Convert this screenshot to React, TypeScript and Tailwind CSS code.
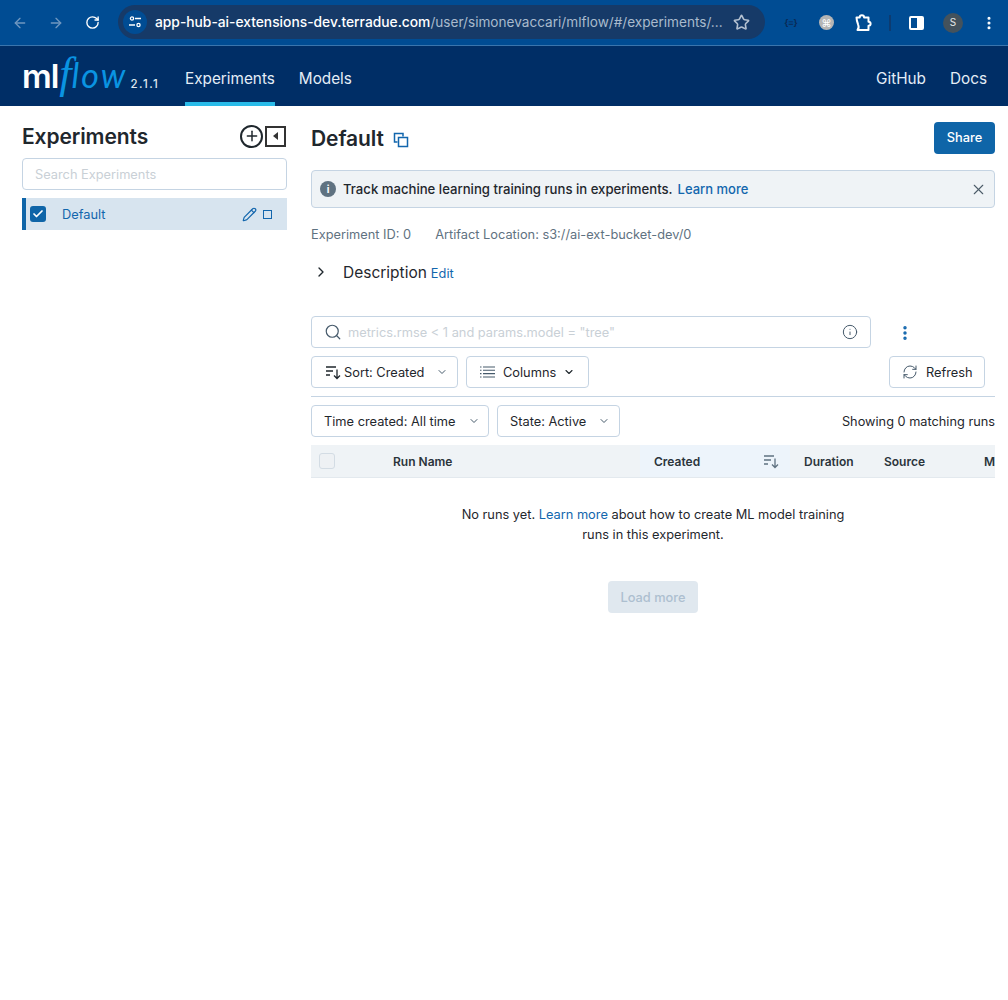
import React from "react";
import { ArrowLeft, ArrowRight, RotateCw, Star, Search, Info, ChevronDown, ChevronRight, X, RefreshCw, Pencil, Check, EllipsisVertical, Plus, MoreVertical } from "lucide-react";

const font = { fontFamily: "Inter, 'Liberation Sans', sans-serif" };

function SortIcon({ className = "" }: { className?: string }) {
  return (
    <svg viewBox="0 0 16 16" width="16" height="16" fill="none" stroke="currentColor" strokeWidth="1.3" className={className}>
      <path d="M1 3h10M1 7h7M1 11h4" />
      <path d="M12 5.5v9M9 11.5l3 3 3-3" />
    </svg>
  );
}

function Btn({ children, className = "" }: { children: React.ReactNode; className?: string }) {
  return (
    <div className={`h-8 flex items-center border border-[#c5d4e3] rounded-[4px] bg-white text-[12.8px] text-[#1f272d] [&>span]:mt-[2px] ${className}`}>
      {children}
    </div>
  );
}

function Chrome() {
  return (
    <div className="h-[46px] bg-[#004c93] border-b border-[#3a75ad] flex items-center">
      <ArrowLeft size={16} className="ml-[12px] text-[#6f97c0]" strokeWidth={2} />
      <ArrowRight size={16} className="ml-[20px] text-[#6f97c0]" strokeWidth={2} />
      <RotateCw size={15} className="ml-[21px] text-white" strokeWidth={2.2} />
      <div className="ml-[18px] w-[647px] h-[34px] mt-[-1px] rounded-full bg-[#163a68] flex items-center">
        <div className="ml-[5px] w-6 h-6 rounded-full bg-[#004c93] flex items-center justify-center">
          <svg viewBox="0 0 14 14" width="14" height="14" fill="none" stroke="white" strokeWidth="1.3">
            <circle cx="4" cy="3.5" r="1.6" />
            <path d="M7 3.5h6M1 10h6" />
            <circle cx="10.5" cy="10" r="1.6" />
          </svg>
        </div>
        <div className="ml-[8px] text-[13.8px] text-white font-medium whitespace-nowrap">
          app-hub-ai-extensions-dev.terradue.com<span className="text-[#a9bacd] font-normal text-[13.6px]">/user/simonevaccari/mlflow/#/experiments/...</span>
        </div>
        <Star size={17} className="ml-auto mr-[15px] text-[#b4c1d1]" strokeWidth={2.3} />
      </div>
      <div className="ml-[17px] w-[18px] text-[9px] font-bold text-[#0a2a55] text-center leading-none whitespace-nowrap">{"{≡}"}</div>
      <div className="ml-[19px] w-[15px] h-[15px] rounded-full bg-[#b5b5b5] text-white text-[10px] flex items-center justify-center leading-none">⌘</div>
      <svg viewBox="0 0 18 18" width="18" height="18" fill="none" stroke="white" strokeWidth="2" strokeLinejoin="round" className="ml-[20px]">
        <path d="M2.5 3.5h3.2c0-3 4.4-3 4.4 0h4.4v4.2c2.8 0 2.8 4 0 4v4.3H3.5c1.4-1.5 1.4-3.5 .6-5.5C3.4 8.5 2.5 6 2.5 3.5z" />
      </svg>
      <div className="ml-[17px] w-[2px] h-4 bg-[#0d3b70]" />
      <div className="ml-[18px] w-[15px] h-[14px] border-2 border-white rounded-[2px] flex justify-end">
        <div className="w-[5px] bg-white" />
      </div>
      <div className="ml-[19px] w-5 h-5 rounded-full bg-[#44525c] text-[#e5e7e9] text-[10px] flex items-center justify-center">S</div>
      <MoreVertical size={16} className="ml-[18px] text-white" strokeWidth={2.6} />
    </div>
  );
}

function Header() {
  return (
    <div className="h-[60px] bg-[#002e66] flex pl-[22px] pr-[21px] text-[#e4edf6] text-[15.3px]">
      <div className="flex items-end w-[163px]">
        <div className="flex items-baseline mb-[10px] leading-none">
          <span className="text-white text-[33px] font-semibold tracking-[-1px]">ml</span>
          <span className="text-[#0a94e2] text-[44px] italic ml-[1px]" style={{ fontFamily: "'Liberation Serif', serif" }}>f</span>
          <span className="text-[#0a94e2] text-[34px] italic tracking-[2px] w-[57px]" style={{ fontFamily: "Lato, sans-serif" }}>low</span>
          <span className="text-[11.5px] tracking-[1.4px] ml-[2px] text-[#dfe7ef] font-medium">2.1.1</span>
        </div>
      </div>
      <div className="relative flex items-center h-full pt-[6px]">
        <span>Experiments</span>
        <div className="absolute left-0 right-0 bottom-0 h-1 bg-[#29bbe9]" />
      </div>
      <div className="flex items-center ml-[24px] pt-[6px]">Models</div>
      <div className="flex items-center ml-auto pt-[6px]">GitHub</div>
      <div className="flex items-center ml-[24px] pt-[6px]">Docs</div>
    </div>
  );
}

function Sidebar() {
  return (
    <div className="w-[265px] ml-[22px] shrink-0 pt-[15px]">
      <div className="h-[30px] flex items-center justify-between">
        <span className="mt-[2px] text-[21px] font-semibold text-[#1f272d] tracking-[-0.1px]">Experiments</span>
        <div className="flex items-center mr-[1px]">
          <div className="w-[23px] h-[23px] rounded-full border-2 border-[#1f272d] flex items-center justify-center">
            <Plus size={16} strokeWidth={2.2} className="text-[#1f272d]" />
          </div>
          <div className="ml-[2px] w-[21px] h-[21px] border-2 border-[#333] flex items-center justify-center">
            <div className="w-0 h-0 border-y-[4px] border-y-transparent border-r-[5px] border-r-[#333]" />
          </div>
        </div>
      </div>
      <div className="mt-[7px] h-8 border border-[#c5d4e3] rounded-[4px] flex items-center pl-[12px] text-[12.8px] text-[#c9d0d6]">
        <span className="mt-[2px]">Search Experiments</span>
      </div>
      <div className="mt-2 h-8 bg-[#d7e4ef] border-l-4 border-[#0f65a8] flex items-center pl-1 text-[12.8px] text-[#1266ad]">
        <div className="w-4 h-4 rounded-[3px] bg-[#0f65a8] flex items-center justify-center">
          <Check size={12} strokeWidth={3.5} className="text-white" />
        </div>
        <span className="ml-4 mt-[2px]">Default</span>
        <Pencil size={15} strokeWidth={1.9} className="ml-auto text-[#1266ad]" />
        <div className="ml-[6px] mr-[15px] w-[9px] h-[9px] border border-[#1266ad]" />
      </div>
    </div>
  );
}

function Main() {
  return (
    <div className="ml-[24px] w-[684px] shrink-0 overflow-hidden">
      <div className="pt-4 flex justify-between items-start">
        <div className="flex items-center h-[32px]">
          <span className="mt-[2px] text-[21px] font-semibold text-[#1f272d] tracking-[-0.1px]">Default</span>
          <svg viewBox="0 0 16 16" width="16" height="16" fill="none" stroke="#1266ad" strokeWidth="1.5" className="ml-[9px] mt-[3px]">
            <path d="M10 4.5V1.5H1.5V10H4.5" />
            <rect x="5.5" y="5.5" width="9" height="9" />
          </svg>
        </div>
        <div className="w-[61px] h-8 bg-[#0f65a8] rounded-[4px] text-white text-[12.8px] font-medium flex items-center justify-center">Share</div>
      </div>

      <div className="mt-4 h-[38px] bg-[#eff3f6] border border-[#c5d4e3] rounded-[4px] flex items-center text-[13.15px] font-medium text-[#1f272d]">
        <div className="ml-2 w-[16px] h-[16px] rounded-full bg-[#5f7281] text-white flex items-center justify-center text-[10px] font-bold leading-none">i</div>
        <span className="ml-[7px] mt-[2px]">Track machine learning training runs in experiments.</span>
        <span className="ml-[5px] mt-[2px] text-[#1266ad] text-[13px]">Learn more</span>
        <X size={17} strokeWidth={1.5} className="ml-auto mr-[7px] text-[#4c5c69]" />
      </div>

      <div className="mt-[19px] h-4 flex items-center text-[12.8px] text-[#5f7281]">
        <span>Experiment ID: 0</span>
        <span className="ml-[24px]">Artifact Location: s3://ai-ext-bucket-dev/0</span>
      </div>

      <div className="mt-[17px] h-6 flex items-center text-[#1f272d]">
        <ChevronRight size={16} strokeWidth={2} className="ml-[2px]" />
        <span className="ml-[14px] mt-[2px] text-[15.5px]">Description</span>
        <span className="ml-[4px] mt-[4px] text-[12.8px] text-[#1266ad]">Edit</span>
      </div>

      <div className="mt-[32px] flex items-center">
        <Btn className="w-[560px] pl-[12px] pr-3">
          <Search size={18} strokeWidth={1.6} className="text-[#465a6b]" />
          <span className="ml-[6px] text-[#c9d0d6]">metrics.rmse &lt; 1 and params.model = "tree"</span>
          <Info size={16} strokeWidth={1.5} className="ml-auto text-[#465a6b]" />
        </Btn>
        <EllipsisVertical size={18} strokeWidth={2.6} className="ml-[25px] mt-[1px] text-[#1266ad]" />
      </div>

      <div className="mt-2 flex items-center w-[674px]">
        <Btn className="w-[147px] pl-[13px]">
          <SortIcon className="text-[#1f272d]" />
          <span className="ml-[3px]">Sort: Created</span>
          <ChevronDown size={12} strokeWidth={2} className="ml-[12px] text-[#465a6b]" />
        </Btn>
        <Btn className="ml-2 w-[123px] pl-[12px]">
          <svg viewBox="0 0 16 16" width="17" height="16" fill="none" stroke="#465a6b" strokeWidth="1.1">
            <path d="M3.5 3h12M3.5 6.3h12M3.5 9.6h12M3.5 13h12M.5 3h1.5M.5 6.3h1.5M.5 9.6h1.5M.5 13h1.5" />
          </svg>
          <span className="ml-[7px]">Columns</span>
          <ChevronDown size={12} strokeWidth={2.2} className="ml-[7px] text-[#1f272d]" />
        </Btn>
        <Btn className="ml-auto w-[96px] pl-[12px]">
          <RefreshCw size={16} strokeWidth={1.5} className="text-[#465a6b]" />
          <span className="ml-2">Refresh</span>
        </Btn>
      </div>

      <div className="mt-2 border-t border-[#c5d4e3]" />

      <div className="mt-2 flex items-center">
        <Btn className="w-[178px] pl-[12px]">
          <span>Time created: All time</span>
          <ChevronDown size={12} strokeWidth={2} className="ml-[12px] text-[#465a6b]" />
        </Btn>
        <Btn className="ml-2 w-[123px] pl-[12px]">
          <span>State: Active</span>
          <ChevronDown size={12} strokeWidth={2} className="ml-[12px] text-[#465a6b]" />
        </Btn>
        <span className="ml-auto mt-[2px] text-[12.75px] text-[#1f272d] whitespace-nowrap">Showing 0 matching runs</span>
      </div>

      <div className="mt-2 h-[33px] bg-[#eff3f6] border-b border-[#e3e9ee] flex items-center text-[12px] font-semibold text-[#2b343b] whitespace-nowrap [&>span]:mt-[2px] [&>span]:shrink-0">
        <div className="ml-[8px] w-4 h-4 shrink-0 border border-[#d3dce4] rounded-[3px] bg-[#eef1f4]" />
        <span className="ml-[58px] w-[247px]">Run Name</span>
        <div className="w-[150px] shrink-0 h-full bg-[#edf4fb] flex items-center pl-[14px] pr-[11px] [&>span]:mt-[2px]">
          <span>Created</span>
          <SortIcon className="ml-auto text-[#5f7281]" />
        </div>
        <span className="ml-[14px] w-[80px]">Duration</span>
        <span className="w-[100px]">Source</span>
        <span>Models</span>
      </div>

      <div className="mt-[27px] text-center text-[12.8px] leading-[20px] text-[#1f272d] w-[400px] mx-auto">
        No runs yet. <span className="text-[#1266ad]">Learn more</span> about how to create ML model training runs in this experiment.
      </div>

      <div className="mt-[36px] mx-auto w-[90px] h-8 rounded-[4px] bg-[#e0e8ef] text-[#adbfcf] text-[12.8px] font-medium flex items-center justify-center">
        <span className="mt-[2px]">Load more</span>
      </div>
    </div>
  );
}

export default function App() {
  return (
    <div className="min-h-[1000px] bg-white" style={font}>
      <Chrome />
      <Header />
      <div className="flex">
        <Sidebar />
        <Main />
      </div>
    </div>
  );
}
